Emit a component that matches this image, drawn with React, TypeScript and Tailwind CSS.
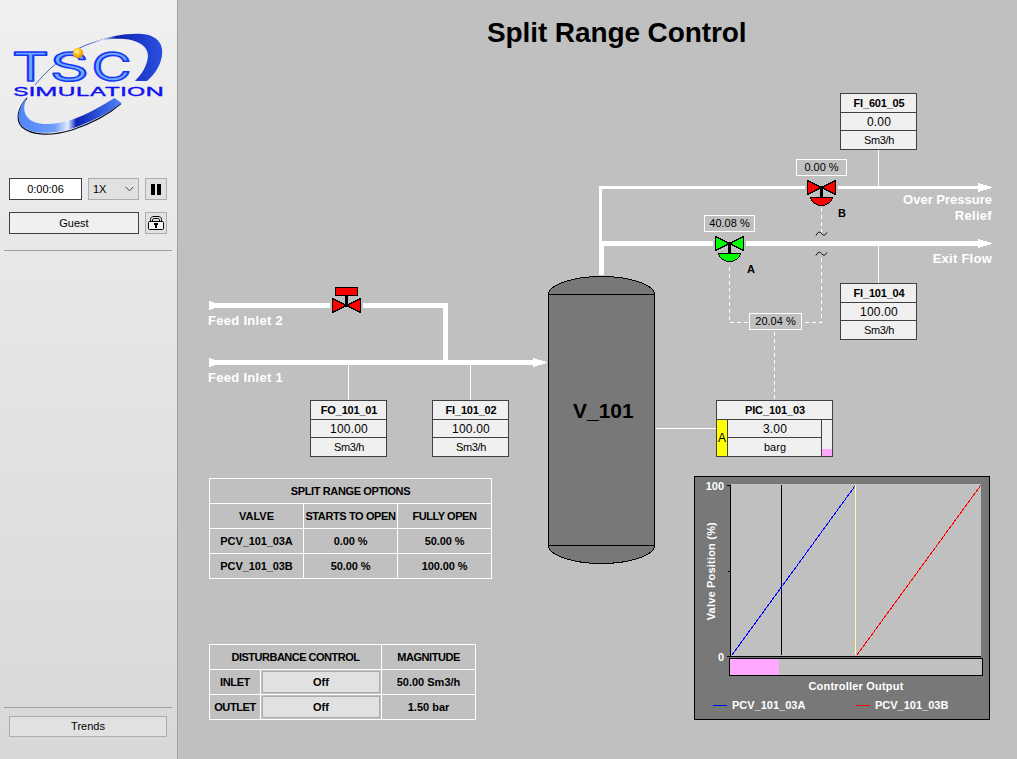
import { ReactNode } from "react";

const FONT = "font-['Liberation_Sans',Arial,sans-serif]";

function Logo() {
  return (
    <svg width="178" height="125" viewBox="0 20 178 125" className="block">
      <defs>
        <linearGradient id="upper" x1="0" x2="1" y1="0" y2="0">
          <stop offset="0" stopColor="#7fa6f8" />
          <stop offset="0.2" stopColor="#eef2ff" />
          <stop offset="0.38" stopColor="#0a23b4" />
          <stop offset="1" stopColor="#2d50e0" />
        </linearGradient>
        <linearGradient id="lower" x1="0" x2="1" y1="0" y2="0">
          <stop offset="0" stopColor="#4f86f8" />
          <stop offset="0.35" stopColor="#6f9dfa" />
          <stop offset="0.48" stopColor="#e4ecff" />
          <stop offset="0.56" stopColor="#0a22b8" />
          <stop offset="1" stopColor="#4f86f8" />
        </linearGradient>
        <radialGradient id="ball" cx="0.4" cy="0.35" r="0.7">
          <stop offset="0" stopColor="#fff6c0" />
          <stop offset="0.45" stopColor="#ffc020" />
          <stop offset="1" stopColor="#d88a00" />
        </radialGradient>
      </defs>
      <path d="M35 85 C47 70 66 53 84 46 C96 41 108 38 117 36" fill="none" stroke="#3058b0" strokeWidth="0.9" />
      <path d="M88 44 C110 36 128 33 142 34 C157 35 164 44 162 56 C160 66 155 74 147 81 L135 81 C142 74 147 66 148 56 C148 46 138 40 124 39 C113 38 102 40 88 44Z" fill="url(#upper)" />
      <path d="M27 98 C18 108 15 119 22 127 C32 136 52 136 72 130 C90 124 109 114 121 103.500" fill="none" stroke="#0a0a20" strokeWidth="1.2" />
      <path d="M27 97 C18 108 16 118 22 126 C32 135 52 134 71 129 C89 123 109 113 121.500 103 L114.500 98 C100 107 86 115 71 120 C54 125 37 126 29 119 C23 113 23 106 27 97Z" fill="url(#lower)" />
      <g fontFamily="Inter, 'Liberation Sans', sans-serif" fontSize="40" fill="#6fa8ff" stroke="#1638f4" strokeWidth="1.5" strokeLinejoin="round">
        <text x="12" y="80.500" textLength="37" lengthAdjust="spacingAndGlyphs">T</text>
        <text x="50" y="80.500" textLength="39" lengthAdjust="spacingAndGlyphs">S</text>
        <text x="91.500" y="80.500" textLength="40" lengthAdjust="spacingAndGlyphs">C</text>
      </g>
      <text x="13" y="96" textLength="151" lengthAdjust="spacingAndGlyphs" fontFamily="Inter, 'Liberation Sans', sans-serif" fontSize="12" fill="#1010f0" stroke="#1010f0" strokeWidth="0.3">SIMULATION</text>
      <circle cx="78" cy="53" r="5.200" fill="url(#ball)" />
    </svg>
  );
}

function Sidebar() {
  return (
    <aside className="flex h-full w-[178px] shrink-0 flex-col border-r border-[#a0a0a0] bg-linear-to-b from-[#f0f0f0] to-[#d8d8d8] text-[11px] text-black">
      <div className="mt-5 h-[125px]">
        <Logo />
      </div>
      <div className="mt-[33px] flex h-[22px] gap-[6px] pl-[9px]">
        <div className="flex w-[73px] items-center justify-center border border-[#404040] bg-white">0:00:06</div>
        <button className="flex w-[51px] items-center justify-between border border-[#adadad] bg-[#e1e1e1] pr-1 pl-[4px]">
          1X
          <svg width="9" height="6" viewBox="0 0 9 6" fill="none" stroke="#404040"><path d="M0.500 0.800 4.500 4.800 8.500 0.800" /></svg>
        </button>
        <button className="flex w-[22px] items-center justify-center gap-[2px] border border-[#adadad] bg-[#e1e1e1]">
          <span className="h-[11px] w-1 bg-black" />
          <span className="h-[11px] w-1 bg-black" />
        </button>
      </div>
      <div className="mt-3 flex h-[22px] gap-[6px] pl-[9px]">
        <div className="flex w-[130px] items-center justify-center border border-[#404040] bg-[#f0f0f0]">Guest</div>
        <button className="flex w-[22px] items-center justify-center border border-[#adadad] bg-[#e1e1e1]">
          <svg width="16" height="14" viewBox="0 0 16 14" fill="none" stroke="#000">
            <path d="M2.500 5V3.500C2.500 1.500 4 0.500 6 0.500h4c2 0 3.500 1 3.500 3V5M4.500 5V4c0-1 .7-1.500 2-1.500h3c1.300 0 2 .5 2 1.500v1" />
            <rect x="0.500" y="5.500" width="15" height="8" rx="1" fill="#f4f4f4" />
            <path d="M6 7h4v2H9v3H7V9H6z" fill="#000" stroke="none" />
          </svg>
        </button>
      </div>
      <div className="mt-4 mr-[5px] ml-1 h-px bg-[#a0a0a0]" />
      <div className="mt-auto mr-[5px] ml-1 h-px bg-[#a0a0a0]" />
      <button className="mt-2 mb-[22px] ml-[9px] h-[21px] w-[158px] border border-[#adadad] bg-[#e1e1e1]">Trends</button>
    </aside>
  );
}

function Bowtie({ x, y, color }: { x: number; y: number; color: string }) {
  return (
    <g stroke="#000" fill={color}>
      <path d={`M${x - 14} ${y - 7}L${x} ${y}L${x - 14} ${y + 7}ZM${x + 14} ${y - 7}L${x} ${y}L${x + 14} ${y + 7}Z`} />
    </g>
  );
}

function ControlValve({ x, y, color }: { x: number; y: number; color: string }) {
  return (
    <g>
      <Bowtie x={x} y={y} color={color} />
      <rect x={x - 1.5} y={y - 1.5} width="3" height="11" fill="#000" />
      <rect x={x - 2.5} y={y - 1.5} width="5" height="3" fill="#000" />
      <path d={`M${x - 11} ${y + 10}H${x + 11}C${x + 10} ${y + 15} ${x + 5} ${y + 18} ${x} ${y + 18}C${x - 5} ${y + 18} ${x - 10} ${y + 15} ${x - 11} ${y + 10}Z`} fill={color} stroke="#000" />
    </g>
  );
}

function Piping() {
  return (
    <svg className="absolute inset-0" width="839" height="759" viewBox="178 0 839 759" shapeRendering="crispEdges">
      <g fill="none" stroke="#fff" strokeWidth="5">
        <path d="M215 305.500H330M363 305.500H445.500V362.500M215 362.500H534" />
        <path d="M601.500 275V241M602 243.500H713M746 243.500H979" />
        <path d="M600.500 243V187.500H805M838 187.500H979" strokeWidth="3" />
      </g>
      <g fill="#fff">
        <path d="M209 301L216 303V308L209 310Z" />
        <path d="M209 358L216 360V365L209 367Z" />
        <path d="M533 358V367L547 363V362Z" />
        <path d="M978 183V192L992 188V187Z" />
        <path d="M978 239V248L992 244V243Z" />
      </g>
      <path d="M348.500 365V400M470.500 365V400M878.500 150V186M878.500 246V283M656 428.500H716" stroke="#fff" />
      <g fill="none" stroke="#fff" strokeDasharray="4 3">
        <path d="M821.500 208V232" />
        <path d="M821.500 258V322.500H802" />
        <path d="M729.500 267V322.500H749" />
        <path d="M774.500 332V400" />
      </g>
      <path d="M816 235.500C818 231.500 820 231.500 821.500 233.500S825 236 827 232.500M816 255.500C818 251.500 820 251.500 821.500 253.500S825 256 827 252.500" fill="none" stroke="#000" shapeRendering="geometricPrecision" />
      <Bowtie x={346.5} y={305.5} color="#f00" />
      <rect x="345" y="296" width="3" height="11" />
      <rect x="344" y="304" width="5" height="3" />
      <rect x="335.500" y="287.500" width="22" height="8" fill="#f00" stroke="#000" />
      <ControlValve x={821.5} y={187.5} color="#f00" />
      <ControlValve x={729.5} y={243.5} color="#0f0" />
      <path d="M548.500 294.500C548.500 285 572 276.500 601.500 276.500S654.500 285 654.500 294.500V545.500C654.500 555 631 563.500 601.500 563.500S548.500 555 548.500 545.500ZM548.500 294.500H654.500M548.500 545.500H654.500" fill="#787878" stroke="#000" />
    </svg>
  );
}

function Tag({ place, name, value, unit }: { place: string; name: string; value: string; unit: string }) {
  return (
    <div className={`absolute grid h-[57px] w-[77px] grid-rows-[18px_17px_18px] gap-px border border-[#404040] bg-[#404040] text-center text-[11px] leading-[18px] ${place}`}>
      <div className="bg-[#f0f0f0] pl-px font-bold tracking-[-0.2px]">{name}</div>
      <div className="bg-[#f0f0f0] pt-px pl-px text-[12px] leading-4 tracking-[0.2px]">{value}</div>
      <div className="bg-[#f0f0f0] pl-px tracking-[-0.4px]">{unit}</div>
    </div>
  );
}

function Controller() {
  return (
    <div className="absolute top-[400px] left-[538px] grid h-[57px] w-[117px] grid-cols-[10px_93px_10px] grid-rows-[18px_17px_18px] gap-px border border-[#404040] bg-[#404040] text-center text-[11px] leading-[18px]">
      <div className="col-span-3 bg-[#f0f0f0] pl-px font-bold tracking-[-0.1px]">PIC_101_03</div>
      <div className="row-span-2 flex items-center justify-center bg-[#ff0] text-[12px]">A</div>
      <div className="bg-[#f0f0f0] pt-px pl-px text-[12px] leading-4 tracking-[0.2px]">3.00</div>
      <div className="row-span-2 flex items-end bg-[#f0f0f0]"><span className="h-[7px] w-full bg-[#ffa8ff]" /></div>
      <div className="bg-[#f0f0f0] pl-px">barg</div>
    </div>
  );
}

function Percent({ place, children }: { place: string; children: ReactNode }) {
  return <div className={`absolute flex h-[17px] items-center justify-center border border-white bg-[#c0c0c0] text-[11px] whitespace-pre ${place}`}>{children}</div>;
}

function Label({ place, children }: { place: string; children: ReactNode }) {
  return <div className={`absolute font-bold whitespace-nowrap ${place}`}>{children}</div>;
}

const CELL = "flex items-center justify-center bg-[#c0c0c0] whitespace-nowrap";

function SplitTable() {
  const rows = [["PCV_101_03A", "0.00 %", "50.00 %"], ["PCV_101_03B", "50.00 %", "100.00 %"]];
  return (
    <div className="grid w-[283px] grid-cols-[93px_93px_93px] auto-rows-[24px] gap-px border border-white bg-white text-[11px] font-bold">
      <div className={`${CELL} col-span-3 tracking-[-0.38px]`}>SPLIT RANGE OPTIONS</div>
      <div className={CELL}>VALVE</div>
      <div className={`${CELL} tracking-[-0.38px]`}>STARTS TO OPEN</div>
      <div className={`${CELL} tracking-[-0.45px]`}>FULLY OPEN</div>
      {rows.flat().map((c, i) => <div key={i} className={`${CELL} tracking-[-0.1px]`}>{c}</div>)}
    </div>
  );
}

function DisturbanceTable() {
  const rows = [["INLET", "50.00 Sm3/h"], ["OUTLET", "1.50 bar"]];
  return (
    <div className="grid w-[267px] grid-cols-[50px_120px_93px] auto-rows-[24px] gap-px border border-white bg-white text-[11px] font-bold">
      <div className={`${CELL} col-span-2 tracking-[-0.5px]`}>DISTURBANCE CONTROL</div>
      <div className={`${CELL} tracking-[-0.45px]`}>MAGNITUDE</div>
      {rows.map(([name, magnitude]) => (
        <div key={name} className="contents">
          <div className={`${CELL} tracking-[-0.4px]`}>{name}</div>
          <div className="bg-[#c0c0c0] p-px">
            <button className="block h-[22px] w-[118px] border border-[#adadad] bg-[#e1e1e1]">Off</button>
          </div>
          <div className={CELL}>{magnitude}</div>
        </div>
      ))}
    </div>
  );
}

function Chart() {
  return (
    <div className="flex h-[244px] w-[296px] flex-col border border-black bg-[#787878] text-[11px] font-bold text-white">
      <div className="flex h-[181px]">
        <div className="flex w-[22px] items-end justify-end pb-[38px]">
          <span className="-mr-[1px] rotate-180 leading-[14px] whitespace-nowrap tracking-[0.2px] [writing-mode:vertical-rl]">Valve Position (%)</span>
        </div>
        <div className="flex w-[10px] flex-col items-end justify-between pt-[3px] pr-[3px]">
          <span className="h-3 w-[24px] text-right leading-3">100</span>
          <span className="-mb-[5px] h-3 leading-3">0</span>
        </div>
        <svg width="260" height="181" viewBox="727 477 260 181" shapeRendering="crispEdges" fill="none">
          <rect x="731" y="484" width="250" height="172" fill="#c0c0c0" />
          <path d="M730.500 485V657M727 485.500H731M728 571.500H731M727 656.500H981M781.500 485V655" stroke="#000" />
          <path d="M855.500 485V655" stroke="#ffff99" />
          <path d="M732 655L855 486" stroke="#00f" />
          <path d="M857 655L981 485" stroke="#f00" />
        </svg>
      </div>
      <div className="ml-[34px] h-[18px] w-[254px] border border-black bg-[#c0c0c0]">
        <div className="h-full w-[49px] bg-[#ffa8ff]" />
      </div>
      <div className="mt-[3px] ml-[28px] text-center leading-[14px] tracking-[0.2px]">Controller Output</div>
      <div className="mt-[5px] flex items-center pl-[18px] leading-[14px]">
        <span className="h-px w-[14px] bg-[#00f]" />
        <span className="ml-[5px] w-[124px]">PCV_101_03A</span>
        <span className="h-px w-[14px] bg-[#f00]" />
        <span className="ml-[5px]">PCV_101_03B</span>
      </div>
    </div>
  );
}

export default function App() {
  return (
    <div className={`flex h-[759px] w-[1017px] overflow-hidden bg-[#c0c0c0] text-black ${FONT}`}>
      <Sidebar />
      <main className="relative flex-1">
        <Piping />
        <div className="relative flex h-full flex-col">
          <h1 className="pt-[17px] pl-[309px] text-[28px] leading-8 font-bold tracking-[-0.1px]">Split Range Control</h1>
          <div className="mt-auto flex h-[283px] items-start pl-[31px]">
            <div className="flex w-[485px] flex-col gap-[65px] pt-[2px]">
              <SplitTable />
              <DisturbanceTable />
            </div>
            <Chart />
          </div>
        </div>
        <Tag place="left-[132px] top-[400px]" name="FO_101_01" value="100.00" unit="Sm3/h" />
        <Tag place="left-[254px] top-[400px]" name="FI_101_02" value="100.00" unit="Sm3/h" />
        <Tag place="left-[662px] top-[93px]" name="FI_601_05" value="0.00" unit="Sm3/h" />
        <Tag place="left-[662px] top-[283px]" name="FI_101_04" value="100.00" unit="Sm3/h" />
        <Controller />
        <Percent place="left-[618px] top-[159px] w-[51px]">0.00 %</Percent>
        <Percent place="left-[526px] top-[215px] w-[51px]">40.08 %</Percent>
        <Percent place="left-[571px] top-[313px] w-[53px]">20.04 %</Percent>
        <Label place="left-[30px] top-[313px] text-[13px] leading-4 tracking-[0.3px] text-white">Feed Inlet 2</Label>
        <Label place="left-[30px] top-[370px] text-[13px] leading-4 tracking-[0.3px] text-white">Feed Inlet 1</Label>
        <Label place="right-[25px] top-[192px] text-[13px] leading-4 text-white text-right">Over Pressure<br /><span className="tracking-[0.3px]">Relief</span></Label>
        <Label place="right-[25px] top-[251px] text-[13px] leading-4 tracking-[0.25px] text-white">Exit Flow</Label>
        <Label place="left-[660px] top-[206px] text-[11px] leading-[14px]">B</Label>
        <Label place="left-[569px] top-[262px] text-[11px] leading-[14px]">A</Label>
        <Label place="left-[395px] top-[399px] text-[21px] leading-6">V_101</Label>
      </main>
    </div>
  );
}
